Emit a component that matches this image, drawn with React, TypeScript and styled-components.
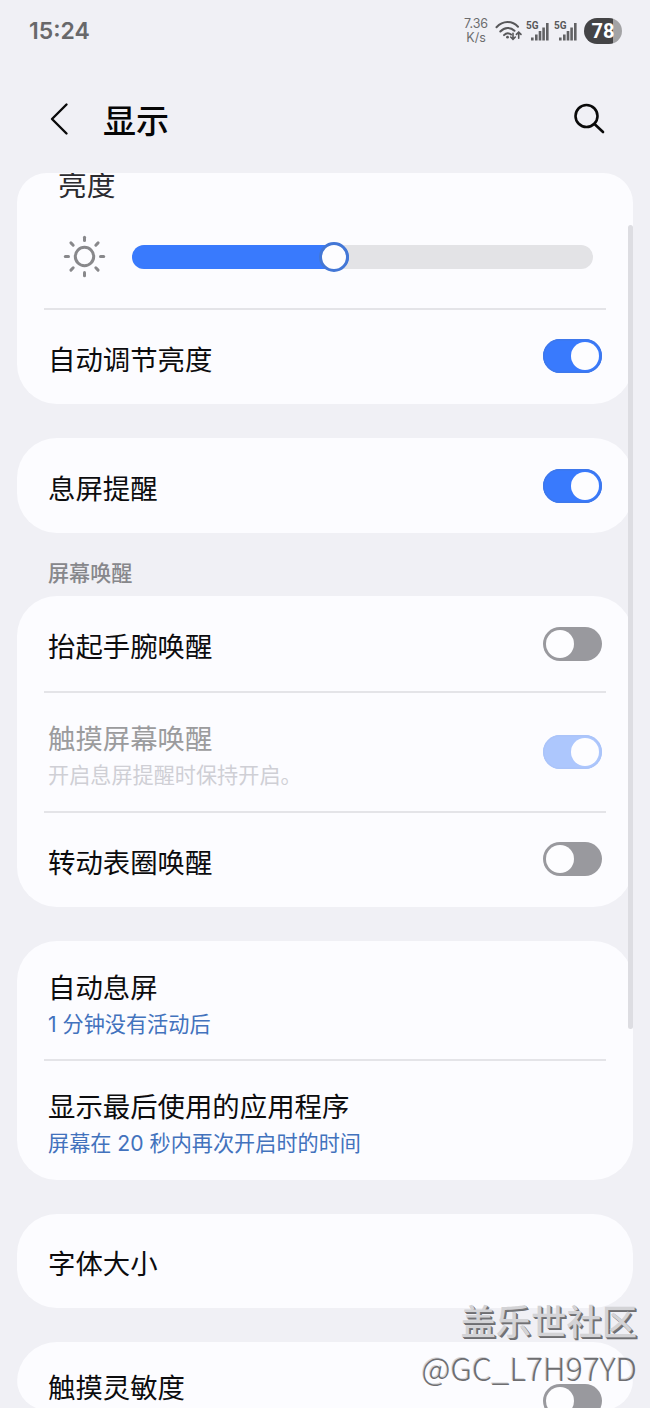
import React from 'react';
import styled, { createGlobalStyle, css } from 'styled-components';

const GlobalStyle = createGlobalStyle`
  * { box-sizing: border-box; }
  html, body { margin: 0; padding: 0; background: #f0f0f5; overflow: hidden; }
  body { font-family: Inter, 'Noto Sans CJK SC', sans-serif; color: #0c0c0e; }
`;

const Screen = styled.div`
  position: relative;
  display: flex;
  flex-direction: column;
  width: 650px;
  height: 1408px;
  overflow: hidden;
  background: #f0f0f5;
`;

const StatusBar = styled.header`
  display: flex;
  flex: none;
  align-items: center;
  justify-content: space-between;
  height: 62px;
  padding: 0 28px 0 29px;
`;

const Clock = styled.span`
  font: 600 23px/28px Inter, sans-serif;
  color: #68686a;
`;

const StatusIcons = styled.div`
  display: flex;
  align-items: center;
`;

const NetSpeed = styled.div`
  width: 26px;
  margin-right: 6px;
  font: 400 12.5px/14px Inter, sans-serif;
  color: #6c6c6e;
  text-align: center;
`;

const Battery = styled.div`
  display: flex;
  align-items: center;
  justify-content: center;
  width: 38px;
  height: 26px;
  margin-left: 5px;
  border-radius: 13px;
  background: linear-gradient(90deg, #444446 29px, #a3a3a5 29px);
  color: #fff;
  font: 700 20px/26px Roboto, sans-serif;
`;

const TitleBar = styled.div`
  display: flex;
  flex: none;
  align-items: center;
  height: 110px;
  padding: 3px 44px 0 46px;
`;

const Title = styled.h1`
  flex: 1;
  margin: 0 0 0 31px;
  padding-top: 1px;
  font: 500 33px/44px 'Noto Sans CJK SC', sans-serif;
  color: #060606;
`;

const ScrollArea = styled.main`
  position: relative;
  flex: none;
  width: 616px;
  height: 1237px;
  margin: 0.5px 17px 0;
  overflow: hidden;
  border-radius: 30px;
`;

const Card = styled.section<{ $gap?: number; $continued?: boolean }>`
  margin-top: ${p => p.$gap ?? 34}px;
  border-radius: ${p => (p.$continued ? '0 0 40px 40px' : '40px')};
  background: #fcfcff;
`;

const SectionTitle = styled.h2`
  height: 63.5px;
  margin: 0;
  padding: 24.5px 31px 0;
  font: 500 21.1px/30px 'Noto Sans CJK SC', sans-serif;
  color: #87878b;
`;

const Row = styled.div<{ $height: number }>`
  display: flex;
  align-items: center;
  justify-content: space-between;
  height: ${p => p.$height}px;
  padding: 0 31px;
`;

const Divider = styled.hr`
  height: 2px;
  margin: -1px 27px;
  border: 0;
  background: #e4e4e8;
`;

const TextBlock = styled.div<{ $tall?: boolean }>`
  display: flex;
  flex-direction: column;
  min-height: ${p => (p.$tall ? 75 : 36)}px;
  padding-top: ${p => (p.$tall ? 9 : 3)}px;
  box-sizing: content-box;
`;

const Label = styled.span<{ $disabled?: boolean }>`
  font-family: 'Noto Sans CJK SC', sans-serif;
  font-size: 27.4px;
  line-height: 36px;
  color: ${p => (p.$disabled ? '#9b9b9d' : '#0c0c0e')};
`;

const Caption = styled.span<{ $disabled?: boolean }>`
  padding-top: 3px;
  font-size: 21.15px;
  line-height: 36px;
  color: ${p => (p.$disabled ? '#cfcfd5' : '#4272bd')};
`;

const Switch = styled.span<{ $on?: boolean; $disabled?: boolean }>`
  display: flex;
  flex: none;
  width: 59px;
  height: 34px;
  padding: 3px;
  border-radius: 17px;
  ${p =>
    p.$on
      ? css`
          justify-content: flex-end;
          background: ${p.$disabled ? '#adc7fd' : '#397afd'};
          box-shadow: inset 0 0 0 1.5px ${p.$disabled ? '#abc4f9' : '#3e78ec'};
        `
      : css`
          background: #99999e;
        `}
`;

const Knob = styled.span`
  width: 28px;
  height: 28px;
  border-radius: 50%;
  background: #fdfdff;
`;

const BrightnessTitle = styled.div`
  height: 42px;
  padding: 0 41px;
  font: 400 28.7px/22px 'Noto Sans CJK SC', sans-serif;
  color: #2b2b30;
`;

const BrightnessRow = styled.div`
  display: flex;
  align-items: center;
  height: 94px;
  padding: 0 40px 10px 46px;
`;

const Slider = styled.div`
  display: flex;
  align-items: center;
  width: 461px;
  height: 24px;
  margin-left: 26px;
  border-radius: 12px;
  background: #e3e3e6;
`;

const SliderFill = styled.div`
  display: flex;
  align-items: center;
  justify-content: flex-end;
  width: 217px;
  height: 24px;
  border-radius: 12px;
  background: #397afd;
`;

const SliderThumb = styled.div`
  flex: none;
  width: 30px;
  height: 30px;
  border: 3px solid #4377d6;
  border-radius: 50%;
  background: #fdfdff;
`;

const ScrollThumb = styled.div`
  position: absolute;
  top: 52px;
  right: 0;
  width: 5px;
  height: 804px;
  border-radius: 3px;
  background: #dddde2;
`;

const Watermark = styled.div`
  position: absolute;
  right: 13px;
  bottom: 18px;
  text-align: right;
  white-space: nowrap;
`;

const WatermarkName = styled.div`
  font: 500 35.3px/48px 'Noto Sans CJK SC', sans-serif;
  color: #d3d3d6;
  text-shadow: 1px 1px 0 #77777a, 2px 2px 0 #6e6e71;
`;

const WatermarkUser = styled.div`
  font: 300 31.8px/46px 'Noto Sans CJK SC', sans-serif;
  color: #6e6e71;
  text-shadow: -1px -1px 0 #d5d5d8;
`;

const BackIcon = () => (
  <svg width="26" height="34" viewBox="0 0 26 34" fill="none" stroke="#0a0a0a" strokeWidth="2.4" strokeLinecap="round" strokeLinejoin="round">
    <path d="M20.5 2.5 6 17l14.5 14.5" />
  </svg>
);

const SearchIcon = () => (
  <svg width="32" height="32" viewBox="0 0 32 32" fill="none" stroke="#0a0a0a" strokeWidth="2.6" strokeLinecap="round">
    <circle cx="12.5" cy="13" r="11" />
    <path d="m20.5 21 8.5 8" />
  </svg>
);

const SunIcon = () => (
  <svg width="43" height="43" viewBox="-21.5 -21.5 43 43" fill="none" stroke="#88888b" strokeWidth="3" strokeLinecap="round">
    <circle r="9.2" />
    {[0, 45, 90, 135, 180, 225, 270, 315].map(angle => (
      <path key={angle} d="M0-16v-3.2" transform={`rotate(${angle})`} />
    ))}
  </svg>
);

const WifiIcon = () => (
  <svg width="28" height="24" viewBox="0 -0.7 28 24" fill="none" stroke="#58585a" strokeWidth="2" strokeLinecap="round">
    <path d="M1.5 7.5C8 .7 17 .7 23 7" />
    <path d="M5.3 11.8c4.3-4.7 10.3-4.7 14.2-.7" />
    <path d="M9 15.4c2.3-2.3 4.8-2.3 7-.5" />
    <circle cx="12.5" cy="17.5" r="1.4" fill="#58585a" stroke="none" />
    <path strokeWidth="1.6" d="M18 13.5v6m-2.3-2.2L18 19.6l2.3-2.3M23.7 18.5v-6m-2.3 2.2 2.3-2.3 2.3 2.3" />
  </svg>
);

const SignalWrap = styled.div`
  display: flex;
  width: 28px;
  height: 24px;
`;

const SignalIcon = () => (
  <SignalWrap>
    <svg width="28" height="24" viewBox="0 0 28 24">
      <text x="3" y="10" fontFamily="Roboto, sans-serif" fontSize="10" fontWeight="700" fill="#58585a" textLength="12.5">5G</text>
      <g fill="#626264">
        <rect x="8" y="18.5" width="2.6" height="3" />
        <rect x="12" y="15.5" width="2.6" height="6" />
        <rect x="15.7" y="12" width="2.6" height="9.5" />
        <rect x="19.3" y="8.5" width="2.6" height="13" />
        <rect x="23" y="4" width="2.6" height="17.5" />
      </g>
    </svg>
  </SignalWrap>
);

type SettingProps = {
  label: string;
  caption?: string;
  height?: number;
  on?: boolean;
  toggle?: boolean;
  disabled?: boolean;
  tall?: boolean;
};

const Setting = ({ label, caption, height = 96, on, toggle, disabled, tall }: SettingProps) => (
  <Row $height={height}>
    <TextBlock $tall={tall || Boolean(caption)}>
      <Label $disabled={disabled}>{label}</Label>
      {caption && <Caption $disabled={disabled}>{caption}</Caption>}
    </TextBlock>
    {toggle && (
      <Switch $on={on} $disabled={disabled}>
        <Knob />
      </Switch>
    )}
  </Row>
);

export default function App() {
  return (
    <Screen>
      <GlobalStyle />
      <StatusBar>
        <Clock>15:24</Clock>
        <StatusIcons>
          <NetSpeed>7.36 K/s</NetSpeed>
          <WifiIcon />
          <SignalIcon />
          <SignalIcon />
          <Battery>78</Battery>
        </StatusIcons>
      </StatusBar>
      <TitleBar>
        <BackIcon />
        <Title>显示</Title>
        <SearchIcon />
      </TitleBar>
      <ScrollArea>
        <Card $continued $gap={0}>
          <BrightnessTitle>亮度</BrightnessTitle>
          <BrightnessRow>
            <SunIcon />
            <Slider>
              <SliderFill>
                <SliderThumb />
              </SliderFill>
            </Slider>
          </BrightnessRow>
          <Divider />
          <Setting label="自动调节亮度" height={95.9} toggle on />
        </Card>
        <Card>
          <Setting label="息屏提醒" height={94.3} toggle on />
        </Card>
        <SectionTitle>屏幕唤醒</SectionTitle>
        <Card $gap={0}>
          <Setting label="抬起手腕唤醒" height={95.5} toggle />
          <Divider />
          <Setting label="触摸屏幕唤醒" caption="开启息屏提醒时保持开启。" height={120} toggle on disabled />
          <Divider />
          <Setting label="转动表圈唤醒" height={95.5} toggle />
        </Card>
        <Card>
          <Setting label="自动息屏" caption="1 分钟没有活动后" height={119} />
          <Divider />
          <Setting label="显示最后使用的应用程序" caption="屏幕在 20 秒内再次开启时的时间" height={119.5} />
        </Card>
        <Card>
          <Setting label="字体大小" height={94} />
        </Card>
        <Card>
          <Setting label="触摸灵敏度" height={119} tall toggle />
        </Card>
        <ScrollThumb />
      </ScrollArea>
      <Watermark>
        <WatermarkName>盖乐世社区</WatermarkName>
        <WatermarkUser>@GC_L7H97YD</WatermarkUser>
      </Watermark>
    </Screen>
  );
}
